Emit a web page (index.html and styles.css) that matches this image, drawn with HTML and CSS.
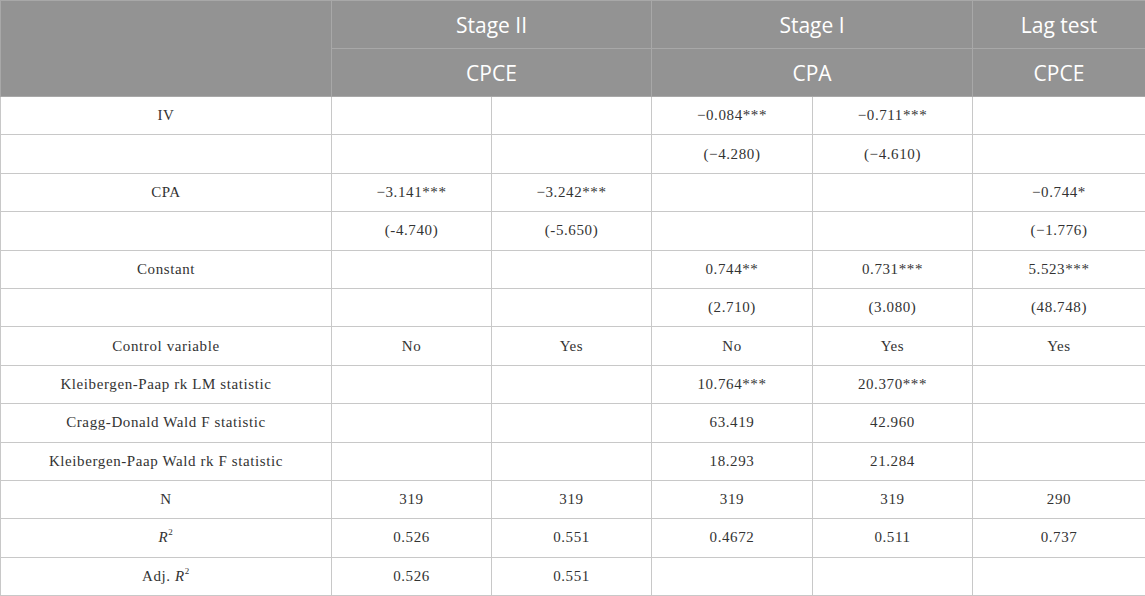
FILE: index.html
```html
<!DOCTYPE html>
<html>
<head>
<meta charset="utf-8">
<link rel="stylesheet" href="styles.css">
</head>
<body>
<table class="tbl">
  <colgroup>
    <col class="c0"><col class="c1"><col class="c2"><col class="c3"><col class="c4"><col class="c5">
  </colgroup>
  <thead>
    <tr class="hrow">
      <th rowspan="2"></th>
      <th colspan="2">Stage II</th>
      <th colspan="2">Stage I</th>
      <th>Lag test</th>
    </tr>
    <tr class="hrow">
      <th colspan="2">CPCE</th>
      <th colspan="2">CPA</th>
      <th>CPCE</th>
    </tr>
  </thead>
  <tbody>
    <tr><td>IV</td><td></td><td></td><td>−0.084***</td><td>−0.711***</td><td></td></tr>
    <tr><td></td><td></td><td></td><td>(−4.280)</td><td>(−4.610)</td><td></td></tr>
    <tr><td>CPA</td><td>−3.141***</td><td>−3.242***</td><td></td><td></td><td>−0.744*</td></tr>
    <tr><td></td><td>(-4.740)</td><td>(-5.650)</td><td></td><td></td><td>(−1.776)</td></tr>
    <tr><td>Constant</td><td></td><td></td><td>0.744**</td><td>0.731***</td><td>5.523***</td></tr>
    <tr><td></td><td></td><td></td><td>(2.710)</td><td>(3.080)</td><td>(48.748)</td></tr>
    <tr><td>Control variable</td><td>No</td><td>Yes</td><td>No</td><td>Yes</td><td>Yes</td></tr>
    <tr><td>Kleibergen-Paap rk LM statistic</td><td></td><td></td><td>10.764***</td><td>20.370***</td><td></td></tr>
    <tr><td>Cragg-Donald Wald F statistic</td><td></td><td></td><td>63.419</td><td>42.960</td><td></td></tr>
    <tr><td>Kleibergen-Paap Wald rk F statistic</td><td></td><td></td><td>18.293</td><td>21.284</td><td></td></tr>
    <tr><td>N</td><td>319</td><td>319</td><td>319</td><td>319</td><td>290</td></tr>
    <tr><td><i>R</i><sup>2</sup></td><td>0.526</td><td>0.551</td><td>0.4672</td><td>0.511</td><td>0.737</td></tr>
    <tr><td>Adj. <i>R</i><sup>2</sup></td><td>0.526</td><td>0.551</td><td></td><td></td><td></td></tr>
  </tbody>
</table>
</body>
</html>
```
FILE: styles.css
```css
html, body {
  margin: 0;
  padding: 0;
  background: #ffffff;
}
.tbl {
  width: 1145px;
  border-collapse: collapse;
  table-layout: fixed;
  font-family: "Liberation Serif", "Times New Roman", serif;
  font-size: 15px;
  letter-spacing: 0.6px;
  color: #333333;
}
.c0 { width: 331px; }
.c1 { width: 160px; }
.c2 { width: 160px; }
.c3 { width: 161px; }
.c4 { width: 160px; }
.c5 { width: 173px; }
.hrow {
  height: 48px;
}
.hrow th {
  background: #939393;
  color: #ffffff;
  font-family: "Open Sans", "Noto Sans", sans-serif;
  font-weight: 400;
  font-size: 21px;
  letter-spacing: 0;
  text-align: center;
  vertical-align: middle;
  border: 1px solid #a8a8a8;
  padding: 0;
}
.tbl tbody tr {
  height: 38.4px;
}
.tbl td {
  border: 1px solid #c8c8c8;
  text-align: center;
  vertical-align: middle;
  padding: 0;
}
.tbl sup {
  font-size: 9px;
  vertical-align: top;
  line-height: 1;
  position: relative;
  top: -1px;
}
```
